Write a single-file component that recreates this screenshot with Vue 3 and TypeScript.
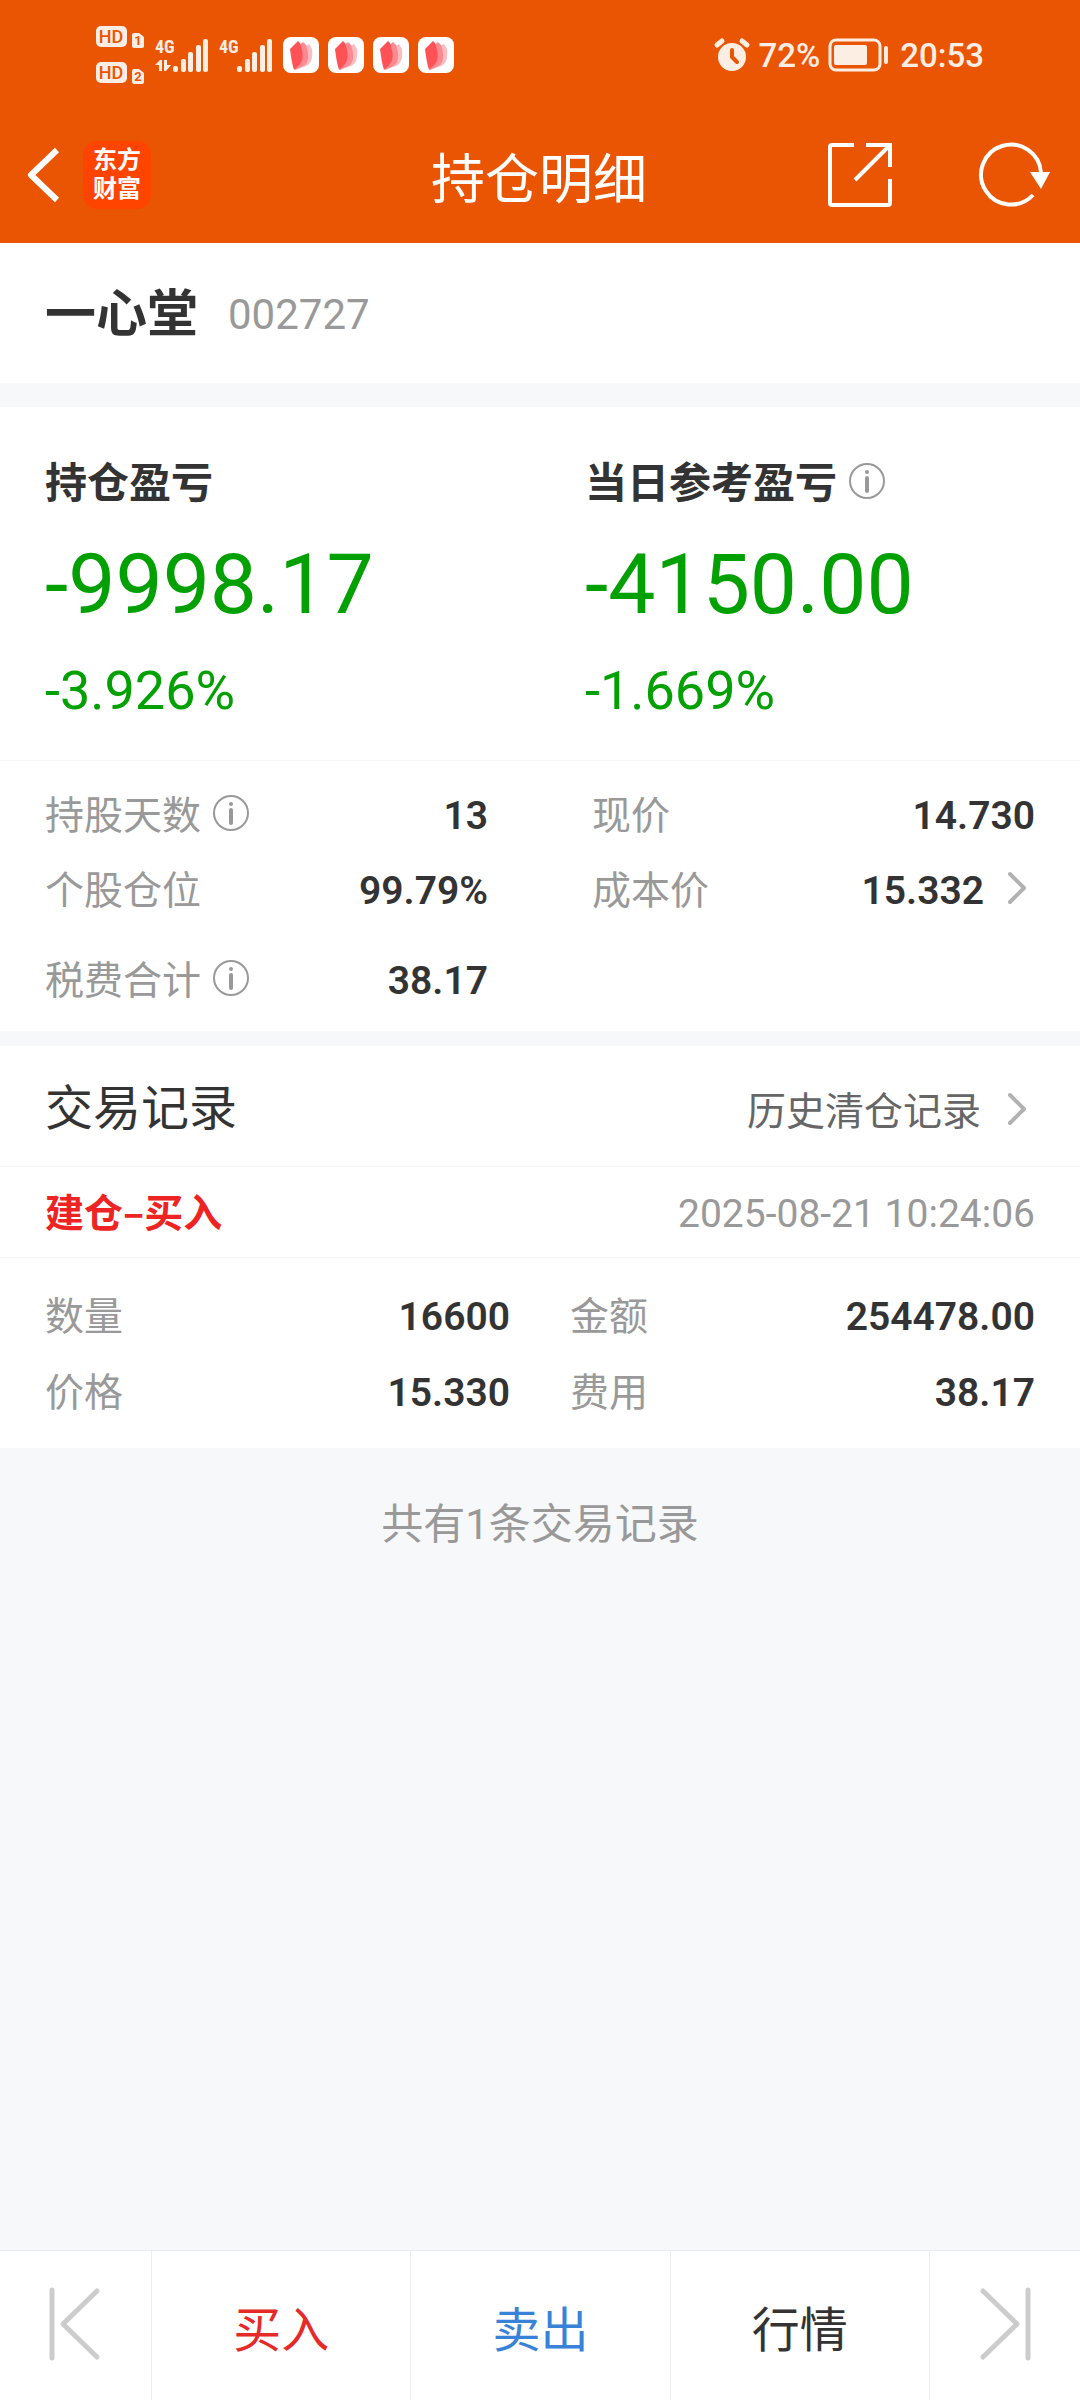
<script setup lang="ts">
interface Profit {
  label: string
  amount: string
  percent: string
  info: boolean
}

interface Field {
  label: string
  value: string
  info?: boolean
  link?: boolean
}

const sims = ['1', '2']
const signals = [{ transfer: true }, { transfer: false }]
const notifications = 4

const profits: Profit[] = [
  { label: '持仓盈亏', amount: '-9998.17', percent: '-3.926%', info: false },
  { label: '当日参考盈亏', amount: '-4150.00', percent: '-1.669%', info: true },
]

const holding: Field[] = [
  { label: '持股天数', value: '13', info: true },
  { label: '现价', value: '14.730' },
  { label: '个股仓位', value: '99.79%' },
  { label: '成本价', value: '15.332', link: true },
  { label: '税费合计', value: '38.17', info: true },
]

const trade: Field[] = [
  { label: '数量', value: '16600' },
  { label: '金额', value: '254478.00' },
  { label: '价格', value: '15.330' },
  { label: '费用', value: '38.17' },
]
</script>

<template>
  <div class="page">
    <div class="status">
      <div class="status-group">
        <div class="sims">
          <svg v-for="n in sims" :key="n" width="48" height="26" viewBox="0 -2 48 26">
            <rect width="31" height="21" rx="5" fill="#fdeee4" />
            <text x="15" y="17" text-anchor="middle" class="hd">HD</text>
            <path d="M36 9a2 2 0 0 1 2-2h5l5 4v9a2 2 0 0 1-2 2h-8a2 2 0 0 1-2-2z" fill="#fdeee4" />
            <text x="42" y="19" text-anchor="middle" class="sim-no">{{ n }}</text>
          </svg>
        </div>
        <svg v-for="(s, i) in signals" :key="i" class="signal" width="54" height="38" viewBox="0 -2 54 38" fill="#fdeee4">
          <text x="0" y="15" class="net">4G</text>
          <path v-if="s.transfer" d="M0 27l5-5h2v11H4v-6zM9 22h3v5h4l-5 6H9z" />
          <rect x="18" y="28" width="5" height="6" rx="2" />
          <rect x="26" y="21" width="5" height="13" rx="2" />
          <rect x="33" y="14" width="5" height="20" rx="2" />
          <rect x="41" y="7" width="5" height="27" rx="2" />
          <rect x="48" y="1" width="5" height="33" rx="2" />
        </svg>
        <div class="notes">
          <svg v-for="n in notifications" :key="n" width="36" height="36" viewBox="0 0 36 36">
            <rect width="36" height="36" rx="8" fill="#fff" />
            <path d="M20 10l6-3 3 5c1 9-1 15-6 17l-11 4z" fill="#fdbcc0" />
            <path d="M15 9l5-4 3 3c3 9 3 16-1 20l-10 5z" fill="#fb8a90" />
            <path d="M7 12l8-8 2 2c3 9 4 16 0 21l-6 6c-2-6-3-13-4-21z" fill="#ff5257" />
          </svg>
        </div>
      </div>
      <div class="status-group right">
        <svg width="36" height="34" viewBox="0 0 36 34">
          <circle cx="18" cy="19" r="14" fill="#fdeee4" />
          <path d="M3 7l5-4M33 7l-5-4" stroke="#fdeee4" stroke-width="5" stroke-linecap="round" />
          <path d="M18 12v7l5 5" fill="none" stroke="#ea5504" stroke-width="4" stroke-linecap="round" stroke-linejoin="round" />
        </svg>
        <span class="battery-text">72%</span>
        <svg class="battery" width="61" height="34" viewBox="0 0 61 34" fill="#fdeee4">
          <rect x="2" y="2" width="50" height="30" rx="6" fill="none" stroke="#fdeee4" stroke-width="3" />
          <rect x="6" y="7" width="33" height="20" rx="2" />
          <rect x="56" y="8" width="4" height="18" rx="2" />
        </svg>
        <span>20:53</span>
      </div>
    </div>

    <header class="nav">
      <div class="nav-left">
        <button type="button" aria-label="返回">
          <svg width="33" height="56" viewBox="0 0 33 56" fill="none" stroke="#fff" stroke-width="6" stroke-linejoin="round">
            <path d="M30 3L4 28l26 25" />
          </svg>
        </button>
        <div class="logo"><span>东方</span><span>财富</span></div>
      </div>
      <h1>持仓明细</h1>
      <div class="nav-right">
        <button type="button" aria-label="分享">
          <svg width="64" height="64" viewBox="0 0 64 64" fill="none" stroke="#fff" stroke-width="4">
            <path d="M26 2H4a2 2 0 0 0-2 2v56a2 2 0 0 0 2 2h56a2 2 0 0 0 2-2V36" />
            <path d="M38 2h24v22M61 3L27 37" />
          </svg>
        </button>
        <button type="button" aria-label="刷新">
          <svg width="72" height="64" viewBox="0 0 72 64">
            <path d="M62 30A30 30 0 1 0 54 52" fill="none" stroke="#fff" stroke-width="4" />
            <path d="M51 29h20l-9 17z" fill="#fff" />
          </svg>
        </button>
      </div>
    </header>

    <main>
      <section class="stock">
        <h2>一心堂</h2>
        <span>002727</span>
      </section>

      <section class="profits">
        <div v-for="p in profits" :key="p.label" class="profit">
          <h3>
            {{ p.label }}
            <svg v-if="p.info" class="info" width="36" height="36" viewBox="0 0 36 36">
              <circle cx="18" cy="18" r="17" fill="none" stroke="#999" stroke-width="2" />
              <circle cx="18" cy="9" r="2" fill="#999" />
              <path d="M18 15v13" stroke="#999" stroke-width="4" stroke-linecap="round" />
            </svg>
          </h3>
          <p class="amount">{{ p.amount }}</p>
          <p class="percent">{{ p.percent }}</p>
        </div>
      </section>

      <dl class="fields holding">
        <div v-for="f in holding" :key="f.label" class="field">
          <dt>
            {{ f.label }}
            <svg v-if="f.info" class="info" width="36" height="36" viewBox="0 0 36 36">
              <circle cx="18" cy="18" r="17" fill="none" stroke="#999" stroke-width="2" />
              <circle cx="18" cy="9" r="2" fill="#999" />
              <path d="M18 15v13" stroke="#999" stroke-width="4" stroke-linecap="round" />
            </svg>
          </dt>
          <dd>
            <a v-if="f.link" href="#cost" class="more">
              {{ f.value }}
              <svg class="chevron" width="30" height="36" viewBox="0 0 30 36">
                <path d="M5 4l14 14L5 32" />
              </svg>
            </a>
            <template v-else>{{ f.value }}</template>
          </dd>
        </div>
      </dl>

      <section class="records">
        <div class="records-head">
          <h2>交易记录</h2>
          <a href="#history" class="more">
            历史清仓记录
            <svg class="chevron" width="30" height="36" viewBox="0 0 30 36">
              <path d="M5 4l14 14L5 32" />
            </svg>
          </a>
        </div>
        <div class="record-title">
          <strong>建仓<span class="dash">–</span>买入</strong>
          <time datetime="2025-08-21T10:24:06">2025-08-21 10:24:06</time>
        </div>
        <dl class="fields trade">
          <div v-for="f in trade" :key="f.label" class="field">
            <dt>{{ f.label }}</dt>
            <dd>{{ f.value }}</dd>
          </div>
        </dl>
      </section>

      <p class="total">共有1条交易记录</p>
    </main>

    <footer class="toolbar">
      <button type="button" class="edge" aria-label="上一只">
        <svg width="54" height="72" viewBox="0 0 54 72">
          <path d="M3 2v68M48 3L14 36l34 33" />
        </svg>
      </button>
      <button type="button" class="buy">买入</button>
      <button type="button" class="sell">卖出</button>
      <button type="button">行情</button>
      <button type="button" class="edge" aria-label="下一只">
        <svg width="54" height="72" viewBox="0 0 54 72">
          <path d="M50 2v68M5 3l34 33L5 69" />
        </svg>
      </button>
    </footer>
  </div>
</template>

<style>
body {
  margin: 0;
}
</style>

<style scoped>
.page {
  display: flex;
  flex-direction: column;
  min-height: 100vh;
  background: #f7f8fa;
  color: #333;
  font-family: Roboto, "Noto Sans CJK SC", sans-serif;
  font-size: 39px;
}

h1,
h2,
h3,
p,
dl,
dd {
  margin: 0;
}

svg {
  display: block;
  flex: none;
  overflow: visible;
}

button {
  padding: 0;
  border: 0;
  background: none;
  color: inherit;
  font: inherit;
}

a {
  color: inherit;
  text-decoration: none;
}

.status {
  display: flex;
  align-items: center;
  justify-content: space-between;
  height: 110px;
  padding: 0 96px;
  background: #ea5504;
  color: #fdeee4;
}

.status-group {
  display: flex;
  align-items: center;
}

.status-group.right {
  font-size: 33px;
  font-weight: 500;
}

.sims {
  display: grid;
  gap: 10px;
  margin-right: 11px;
}

.hd {
  fill: #ea5504;
  font-size: 18px;
  font-weight: 500;
}

.sim-no {
  fill: #ea5504;
  font-size: 13px;
  font-weight: 700;
}

.net {
  font-family: "Roboto Condensed", "Liberation Sans Narrow", Roboto, sans-serif;
  font-size: 18px;
  font-weight: 700;
}

.signal {
  margin-right: 10px;
}

.notes {
  display: flex;
  gap: 9px;
}

.battery-text {
  margin: 0 8px;
}

.battery {
  margin-right: 11px;
}

.nav {
  display: grid;
  grid-template-columns: 1fr auto 1fr;
  align-items: center;
  height: 133px;
  padding: 0 29px 3px 27px;
  box-sizing: border-box;
  background: #ea5504;
  color: #fff;
}

.nav-left,
.nav-right {
  display: flex;
  align-items: center;
}

.nav-left {
  gap: 23px;
}

.nav-right {
  justify-content: flex-end;
  gap: 87px;
}

.logo {
  display: grid;
  align-content: center;
  justify-content: center;
  width: 68px;
  height: 68px;
  border-radius: 14px;
  background: #ff4400;
  font-size: 24px;
  font-weight: 700;
  line-height: 29px;
}

h1 {
  padding-top: 12px;
  font-size: 54px;
  font-weight: 400;
  line-height: 64px;
}

.stock {
  display: flex;
  align-items: center;
  gap: 30px;
  height: 140px;
  padding: 4px 45px 0;
  box-sizing: border-box;
  background: #fff;
  line-height: 60px;
}

.stock h2 {
  font-size: 51px;
  font-weight: 700;
}

.stock span {
  color: #999;
  font-size: 42px;
}

.profits {
  display: grid;
  grid-template-columns: 1fr 1fr;
  margin-top: 24px;
  border-bottom: 1px solid #f5f5f6;
  background: #fff;
}

.profit {
  padding: 52px 45px 39px;
  color: #02a002;
}

.profit h3 {
  display: flex;
  align-items: center;
  gap: 12px;
  color: #333;
  font-size: 42px;
  font-weight: 700;
  line-height: 50px;
}

.info,
.chevron {
  margin-bottom: 7px;
}

.amount {
  margin-top: 28px;
  font-size: 84px;
  line-height: 96px;
}

.percent {
  margin-top: 28px;
  font-size: 54px;
  line-height: 60px;
}

.fields {
  display: grid;
  grid-template-columns: 1fr 1fr;
  background: #fff;
}

.holding {
  grid-template-rows: 75px 75px 90px;
  align-items: end;
  column-gap: 104px;
  padding: 18px 45px 12px;
}

.trade {
  column-gap: 60px;
  padding: 21px 45px 17px;
}

.field {
  display: flex;
  justify-content: space-between;
  line-height: 75px;
}

.trade .field {
  line-height: 76px;
}

dt {
  display: flex;
  align-items: center;
  gap: 12px;
  color: #999;
}

dd {
  font-weight: 600;
}

.more {
  display: flex;
  align-items: center;
  gap: 21px;
}

.chevron path {
  fill: none;
  stroke: #b2b2b2;
  stroke-width: 4;
  stroke-linecap: round;
  stroke-linejoin: round;
}

.records {
  margin-top: 15px;
  background: #fff;
}

.records-head {
  display: flex;
  align-items: baseline;
  justify-content: space-between;
  padding: 33px 45px 24px;
  border-bottom: 1px solid #f5f5f6;
  line-height: 60px;
}

.records-head h2 {
  font-size: 48px;
  font-weight: 400;
}

.records-head .more {
  gap: 24px;
  color: #666;
}

.record-title {
  display: flex;
  align-items: center;
  justify-content: space-between;
  padding: 5px 45px 0;
  border-bottom: 1px solid #f5f5f6;
  line-height: 85px;
}

.record-title strong {
  color: #ee2424;
}

.dash {
  font-family: "Noto Sans CJK SC", sans-serif;
  line-height: 0;
}

.record-title time {
  color: #999;
}

.total {
  padding: 47px 45px;
  color: #999;
  font-size: 42px;
  line-height: 60px;
  text-align: center;
}

.toolbar {
  display: flex;
  height: 149px;
  margin-top: auto;
  border-top: 1px solid #e8eaec;
  background: #fff;
  font-size: 48px;
}

.toolbar button {
  flex: 1;
  border-left: 1px solid #ebedef;
}

.toolbar .edge {
  display: flex;
  flex: 0 0 14%;
  align-items: center;
  justify-content: center;
  padding-bottom: 3px;
}

.toolbar .edge:first-child {
  border-left: 0;
}

.edge path {
  fill: none;
  stroke: #ccc;
  stroke-width: 5;
  stroke-linecap: round;
  stroke-linejoin: round;
}

.toolbar .buy {
  color: #e62a2a;
}

.toolbar .sell {
  color: #3882d8;
}
</style>
